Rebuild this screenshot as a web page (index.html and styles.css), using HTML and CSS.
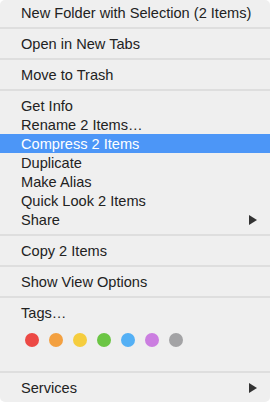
FILE: index.html
```html
<!DOCTYPE html>
<html lang="en">
<head>
    <meta charset="UTF-8">
    <title>Context Menu</title>
    <link rel="stylesheet" href="styles.css">
</head>
<body>
    <!--context menu-->
    <ul class="menu">
        <li class="item">New Folder with Selection (2 Items)</li>
        <li class="sep"></li>
        <li class="item">Open in New Tabs</li>
        <li class="sep"></li>
        <li class="item">Move to Trash</li>
        <li class="sep"></li>
        <li class="item">Get Info</li>
        <li class="item">Rename 2 Items…</li>
        <li class="item on">Compress 2 Items</li>
        <li class="item">Duplicate</li>
        <li class="item">Make Alias</li>
        <li class="item">Quick Look 2 Items</li>
        <li class="item sub">Share</li>
        <li class="sep"></li>
        <li class="item">Copy 2 Items</li>
        <li class="sep"></li>
        <li class="item">Show View Options</li>
        <li class="sep"></li>
        <li class="item">Tags…</li>
        <li class="tags">
            <span class="dot red"></span>
            <span class="dot orange"></span>
            <span class="dot yellow"></span>
            <span class="dot green"></span>
            <span class="dot blue"></span>
            <span class="dot purple"></span>
            <span class="dot gray"></span>
        </li>
        <li class="sep"></li>
        <li class="item sub">Services</li>
    </ul>
</body>
</html>
```

FILE: styles.css
```css
html,
body,
ul {
    margin: 0;
    padding: 0;
}

body {
    background-color: #fff;
}

/*menu box*/
.menu {
    list-style: none;
    width: 270px;
    height: 402px;
    box-sizing: border-box;
    padding-top: 3px;
    background-color: #efefef;
    border-radius: 5px;
    font-family: "Liberation Sans", Arial, sans-serif;
    font-size: 14.6px;
    color: #222;
    overflow: hidden;
}

/*menu row*/
.item {
    position: relative;
    height: 18px;
    padding-top: 1px;
    line-height: 19px;
    padding-left: 21px;
    white-space: nowrap;
}

/*selected row*/
.item.on {
    background-color: #4c96f7;
    color: #fff;
}

/*submenu arrow*/
.item.sub::after {
    content: "";
    position: absolute;
    right: 13px;
    top: 5px;
    border-left: 8px solid #333;
    border-top: 5px solid transparent;
    border-bottom: 5px solid transparent;
}

/*separator*/
.sep {
    height: 12px;
    display: flex;
    align-items: center;
}

.sep::before {
    content: "";
    flex: 1;
    height: 2px;
    background-color: #dedede;
}

/*tag colors*/
.tags {
    height: 44px;
    box-sizing: border-box;
    padding: 11px 0 0 25px;
    display: flex;
    gap: 10px;
}

.dot {
    width: 14px;
    height: 14px;
    border-radius: 50%;
}

.red { background-color: #ec4945; }
.orange { background-color: #f3a040; }
.yellow { background-color: #f5cd3e; }
.green { background-color: #6bc544; }
.blue { background-color: #54b0f5; }
.purple { background-color: #cb7ee0; }
.gray { background-color: #a3a3a5; }
```
